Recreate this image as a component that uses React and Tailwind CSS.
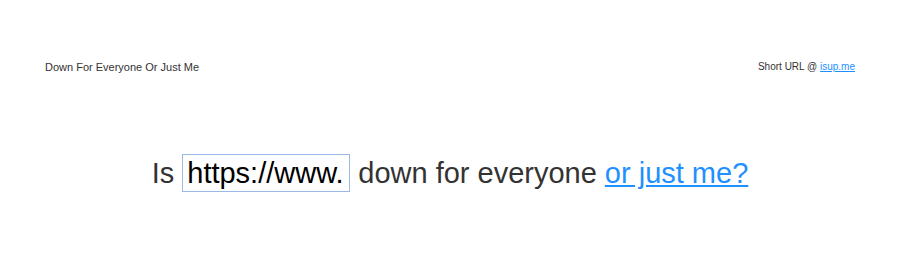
import React from "react";

export default function App() {
  return (
    <div className="w-[900px] h-[258px] bg-white font-['Liberation_Sans',Arial,sans-serif] text-[#333]">
      <div className="flex justify-between items-center px-[45px] pt-[60px] text-[11px] leading-[14px]">
        <span>Down For Everyone Or Just Me</span>
        <span className="text-[10px]">
          Short URL @{" "}
          <a href="#" className="text-[#1e90ff] underline">
            isup.me
          </a>
        </span>
      </div>
      <div className="flex justify-center items-center mt-[80px] text-[29px] leading-[38px]">
        <span>Is</span>
        <input
          type="text"
          defaultValue="https://www."
          className="mx-[8px] w-[168px] h-[38px] border border-[#9bb9e8] px-[4px] text-[29px] text-black outline-none font-['Liberation_Sans',Arial,sans-serif]"
        />
        <span>down for everyone</span>
        <a href="#" className="ml-[8px] text-[#1e90ff] underline">
          or just me?
        </a>
      </div>
    </div>
  );
}
